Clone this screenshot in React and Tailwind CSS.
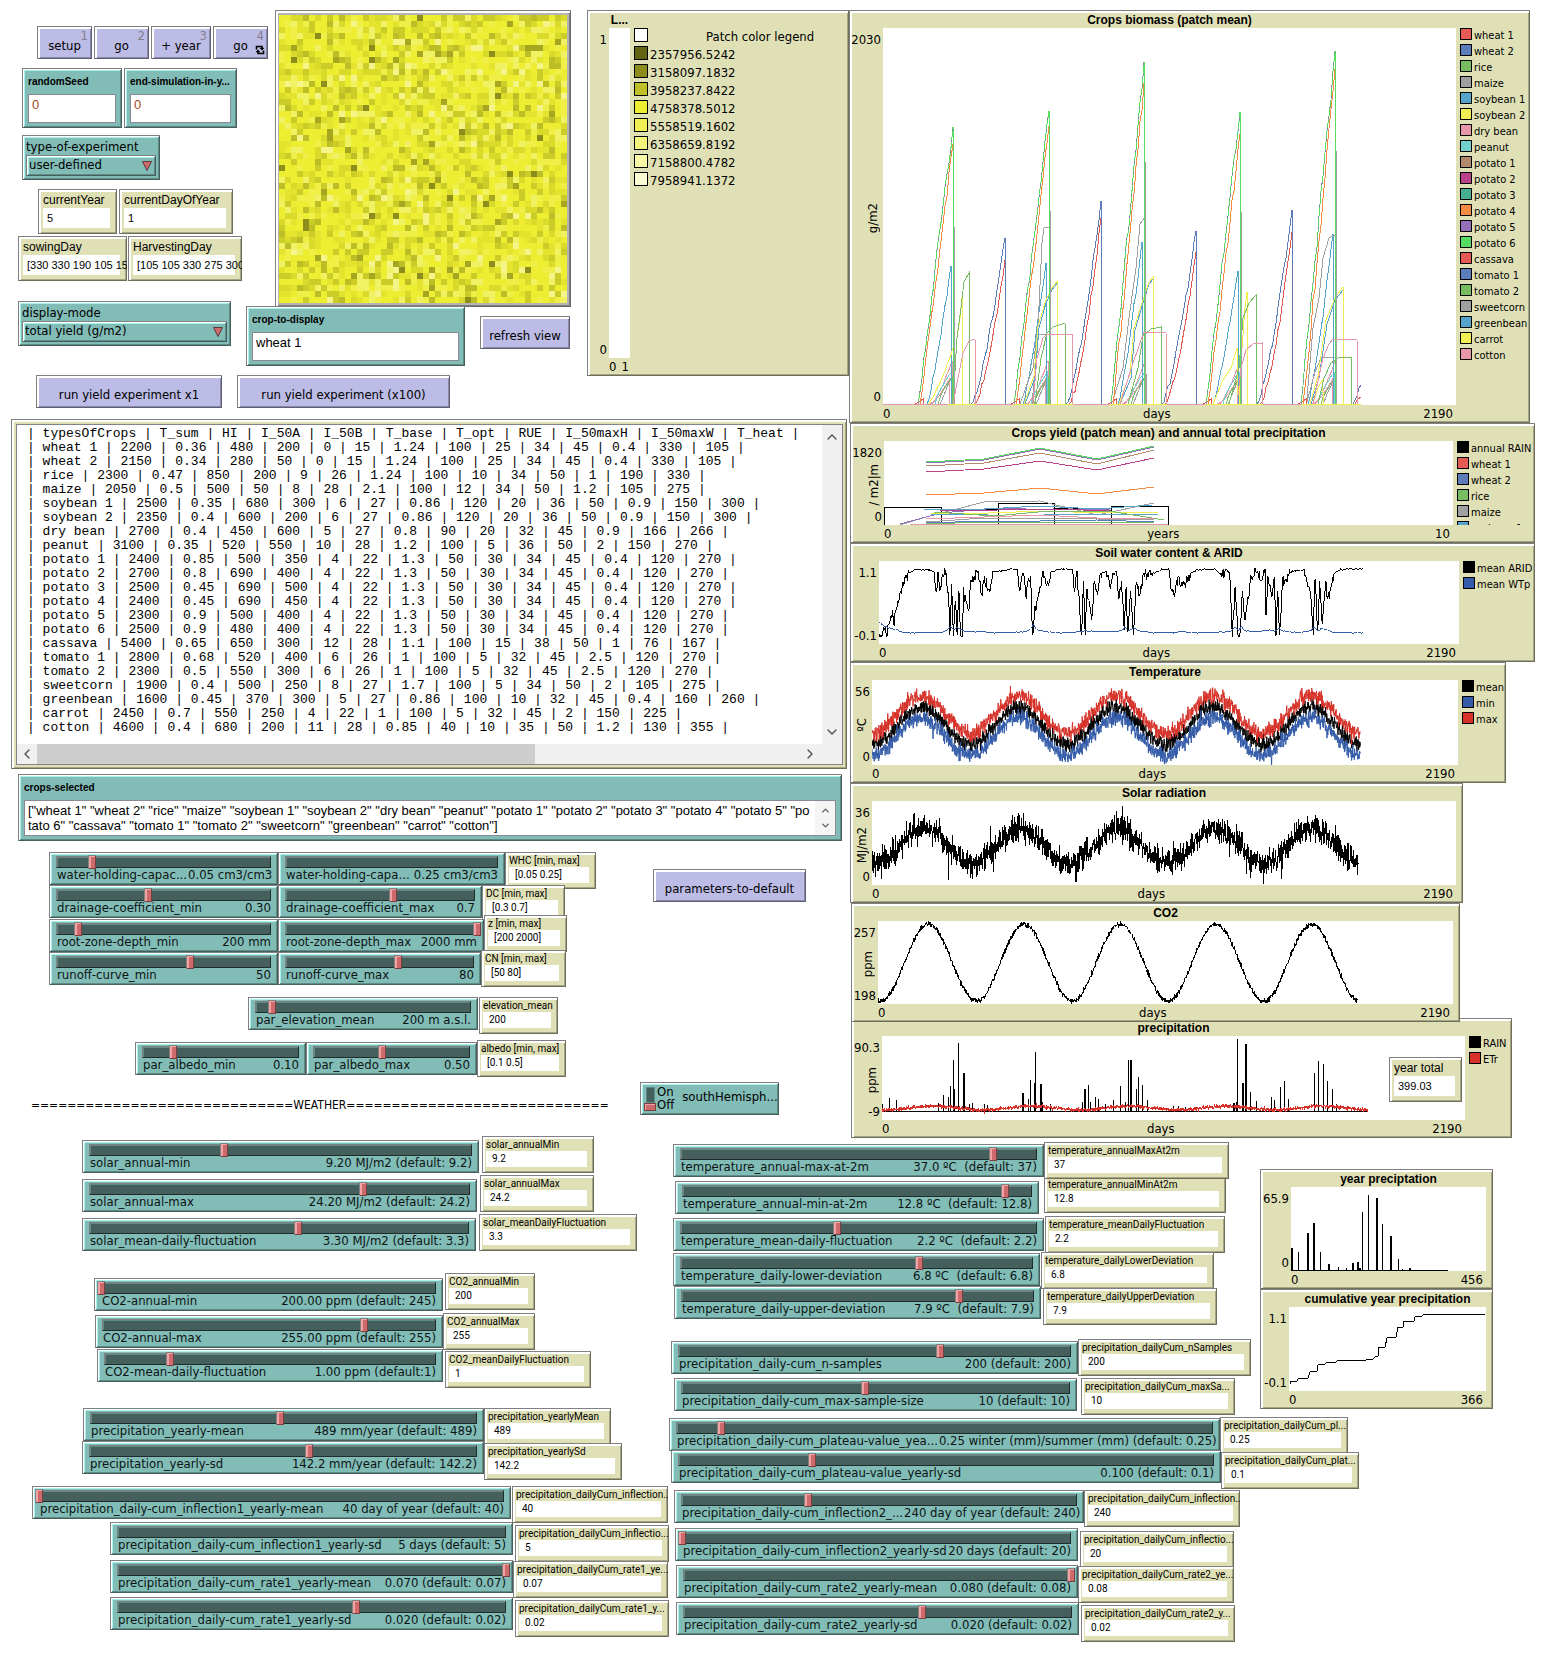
import React, { useId } from "react";
import { ChevronUp, ChevronDown, ChevronLeft, ChevronRight } from "lucide-react";

/* ---------- shared looks ---------- */

const TEAL =
  "bg-[#82bcb7] shadow-[inset_1px_1px_0_#808080,inset_-1px_-1px_0_#445f5c,inset_2px_2px_0_#ffffff,inset_-2px_-2px_0_#5f8b87,inset_3px_3px_0_#a6f3ee]";
const SAND =
  "bg-[#e0e0b6] shadow-[inset_1px_1px_0_#808080,inset_-1px_-1px_0_#6e6e59,inset_3px_3px_0_#ffffff,inset_-2px_-2px_0_#a5a585]";
const LILAC =
  "bg-[#bcbce6] shadow-[inset_1px_1px_0_#808080,inset_-1px_-1px_0_#5d5d75,inset_3px_3px_0_#ffffff,inset_-2px_-2px_0_#8989a9]";
const NARROW = "font-['Liberation_Sans',Arial,sans-serif]";

function Row({ className = "", children }) {
  return <div className={"flex items-start " + className}>{children}</div>;
}

/* ---------- widgets ---------- */

function Button({ className = "", hotkey, loop, children }) {
  return (
    <button type="button" className={"relative h-[33px] shrink-0 pt-[6px] text-[13px] leading-4 " + LILAC + " " + className}>
      {children}
      {hotkey && <span className="absolute right-1 top-0.5 text-[13px] text-[#80808f]">{hotkey}</span>}
      {loop && (
        <svg viewBox="0 0 10 10" className="absolute bottom-1 right-[3px] h-[10px] w-[10px]" aria-hidden="true">
          <path d="M1.5 4.5V1.5H7V3.5M8.5 5.5V8.5H3V6.5" fill="none" stroke="#000" strokeWidth="1.6" />
          <path d="M4.5 2.8H9.5L7 5.6ZM0.5 7.2H5.5L3 4.4Z" fill="#000" />
        </svg>
      )}
    </button>
  );
}

function Slider({ className = "", name, value, at }) {
  const id = useId();
  return (
    <div className={"h-[33px] shrink-0 px-[7px] pt-1 " + TEAL + " " + className}>
      <div className="relative h-3 border border-l-[#808080] border-t-[#808080] border-b-[#1f2c2b] border-r-[#1f2c2b] bg-[#455f5c] shadow-[inset_1px_1px_0_#5f8b87]">
        <input
          id={id}
          type="range"
          min="0"
          max="100"
          step="0.1"
          defaultValue={at ?? 50}
          aria-valuetext={value}
          className={
            "absolute -left-[5px] -top-[2px] h-[14px] w-[calc(100%+10px)] appearance-none bg-transparent [&::-webkit-slider-thumb]:h-[14px] [&::-webkit-slider-thumb]:w-2 [&::-webkit-slider-thumb]:appearance-none [&::-webkit-slider-thumb]:bg-[#cd6a6b] [&::-webkit-slider-thumb]:shadow-[inset_1px_1px_0_#808080,inset_-1px_-1px_0_#7a3f40,inset_3px_2px_0_#f3a3a4] " +
            (at === undefined ? "opacity-0" : "")
          }
        />
      </div>
      <div className="-mt-px flex justify-between gap-px whitespace-pre pl-px text-[13px] leading-4 text-[#0c1413]">
        <label htmlFor={id}>{name}</label>
        <span>{value}</span>
      </div>
    </div>
  );
}

function SmallMonitor({ className = "", name, value }) {
  return (
    <div className={"h-[37px] shrink-0 overflow-hidden pl-1 pr-[7px] pt-[3px] font-[Roboto,sans-serif] text-[10px] leading-3 " + SAND + " " + className}>
      <div className="whitespace-nowrap">{name}</div>
      <output aria-label={name} className="block h-4 whitespace-nowrap bg-white pl-[6px] pt-0.5">{value}</output>
    </div>
  );
}

function Monitor({ className = "", name, value }) {
  return (
    <div className={"h-[45px] shrink-0 overflow-hidden pl-[5px] pr-[7px] pt-1 text-xs leading-[15px] " + NARROW + " " + SAND + " " + className}>
      <div className="whitespace-nowrap">{name}</div>
      <output aria-label={name} className="block h-5 whitespace-nowrap bg-white pl-1 pt-[3px] text-[11px]">{value}</output>
    </div>
  );
}

function InputBox({ className = "", name, value, number }) {
  const id = useId();
  return (
    <div className={"flex h-[60px] shrink-0 flex-col px-[6px] pb-[5px] pt-[7px] " + NARROW + " " + TEAL + " " + className}>
      <label htmlFor={id} className="h-[19px] whitespace-nowrap text-[10px] font-bold leading-[14px]">{name}</label>
      <input
        id={id}
        defaultValue={value}
        className={
          "h-[29px] w-full min-w-0 border border-[#8a8a96] bg-white pb-2 pl-[3px] text-[13px] outline-none " +
          (number ? "text-[#a04a20]" : "text-black")
        }
      />
    </div>
  );
}

function Chooser({ className = "", name, value }) {
  const id = useId();
  return (
    <div className={"h-[45px] shrink-0 px-1 pt-1 " + TEAL + " " + className}>
      <label htmlFor={id} className="block text-[13px] leading-4">{name}</label>
      <div className={"relative h-[21px] " + TEAL}>
        <select id={id} defaultValue={value} className="block h-[21px] w-full appearance-none bg-transparent pb-0.5 pl-[3px] text-[13px] leading-4 outline-none">
          <option>{value}</option>
        </select>
        <svg viewBox="0 0 10 10" className="pointer-events-none absolute right-1 top-1.5 h-[10px] w-[10px]" aria-hidden="true">
          <path d="M0.5 0.5H9.5L5 9.5Z" fill="#cd6a6b" stroke="#5a3a3a" />
        </svg>
      </div>
    </div>
  );
}

/* ---------- plots ---------- */

function Plot({ className = "", cols, title, yMax, yMin, yName, xName, xMin = "0", xMax, viewBox, legend, gap = "pl-1", children }) {
  return (
    <section className={"grid w-full shrink-0 grid-rows-[18px_minmax(0,1fr)_18px] text-[13px] leading-4 " + SAND + " " + cols + " " + className}>
      <h2 className={"col-start-2 row-start-1 overflow-visible whitespace-nowrap pt-[3px] text-center text-xs leading-[15px] font-bold " + NARROW}>{title}</h2>
      <div className="col-start-1 row-start-2 flex min-h-0 flex-col items-end justify-between pr-0.5 pt-1">
        <span className="z-10 whitespace-nowrap">{yMax}</span>
        {yName && <span className="flex min-h-0 rotate-180 items-center overflow-hidden whitespace-nowrap [writing-mode:vertical-rl]">{yName}</span>}
        <span className="whitespace-nowrap">{yMin}</span>
      </div>
      <svg viewBox={viewBox} preserveAspectRatio="none" className="col-start-2 row-start-2 h-full w-full bg-white" aria-label={title} role="img">
        {children}
      </svg>
      {legend && (
        <ul className={"col-start-3 row-start-2 min-h-0 overflow-hidden text-[11px] leading-[15px] " + gap}>
          {legend.map(([label, colour]) => (
            <li key={label} className="flex h-4 items-start gap-0.5 whitespace-nowrap">
              <svg viewBox="0 0 12 12" className="h-3 w-3 shrink-0" aria-hidden="true">
                <rect x="0.5" y="0.5" width="11" height="11" fill={colour} stroke="#000" />
              </svg>
              <span>{label}</span>
            </li>
          ))}
        </ul>
      )}
      <div className="col-start-2 row-start-3 flex justify-between pr-[3px] pt-px">
        <span>{xMin}</span>
        <span>{xName}</span>
        <span>{xMax}</span>
      </div>
    </section>
  );
}

function Line({ points, colour = "#000", width = 1, dash }) {
  return (
    <polyline
      points={points}
      fill="none"
      stroke={colour}
      strokeWidth={width}
      strokeDasharray={dash}
      vectorEffect="non-scaling-stroke"
      shapeRendering="crispEdges"
    />
  );
}

function makeRandom(seed) {
  let s = seed;
  return () => {
    s = (s * 1664525 + 1013904223) % 4294967296;
    return s / 4294967296;
  };
}

function wave({ seed, end, peakX, period, top, bottom, noise, step = 0.59, spikes = 0 }) {
  const rnd = makeRandom(seed);
  const mid = (top + bottom) / 2;
  const amp = (bottom - top) / 2;
  const pts = [];
  for (let x = 0; x <= end; x += step) {
    const base = mid - amp * Math.cos(((x - peakX) / period) * Math.PI * 2);
    let n = (rnd() + rnd() + rnd() - 1.5) * noise;
    if (spikes && rnd() < 0.06) n *= spikes;
    pts.push(x.toFixed(1) + "," + (base + n).toFixed(1));
  }
  return pts.join(" ");
}

const C = {
  red: "#e35b52", blue: "#5d7dba", green: "#79bd62", gray: "#a0a0a0", sky: "#54a4cb", yellow: "#f0ee52",
  pink: "#e697a9", cyan: "#73d0cf", brown: "#b08a6b", magenta: "#b9428a", jade: "#47ae91", orange: "#f68b44",
  purple: "#9470b8", lime: "#57db60",
};

const CROPS = [
  ["wheat 1", C.red], ["wheat 2", C.blue], ["rice", C.green], ["maize", C.gray], ["soybean 1", C.sky],
  ["soybean 2", C.yellow], ["dry bean", C.pink], ["peanut", C.cyan], ["potato 1", C.brown], ["potato 2", C.magenta],
  ["potato 3", C.jade], ["potato 4", C.orange], ["potato 5", C.purple], ["potato 6", C.lime], ["cassava", C.red],
  ["tomato 1", C.blue], ["tomato 2", C.green], ["sweetcorn", C.gray], ["greenbean", C.sky], ["carrot", C.yellow],
  ["cotton", C.pink],
];

/* one season of growth, from the ground up to the harvest and straight down again */
function season(x0, x1, top, curve, seed, drop = true) {
  const rnd = makeRandom(seed);
  const pts = [x0 + ",376"];
  const n = Math.max(4, Math.round((x1 - x0) / 2));
  for (let i = 1; i <= n; i++) {
    const t = i / n;
    const wob = i === n ? 0 : (rnd() - 0.5) * 0.04;
    pts.push((x0 + (x1 - x0) * t).toFixed(1) + "," + (376 - (376 - top) * Math.max(0, Math.pow(t, curve) + wob)).toFixed(1));
  }
  if (drop) pts.push(x1 + ",376");
  return pts.join(" ");
}

const POTATO = [[35, 70, 99, 116], [131, 166, 83, 98], [228, 261, 34, 55], [323, 357, 84, 106], [418, 452, 23, 41]];
const WHEAT = [[88, 122, 210, 232], [183, 218, 173, 190], [279, 313, 203, 224], [374, 409, 182, 204]];
const BEAN = [[44, 68, 238], [140, 163, 235], [235, 259, 214], [330, 355, 243], [425, 450, 206]];

function BiomassPlot() {
  return (
    <Plot
      className="relative z-10 h-[413px] max-w-[681px]"
      cols="grid-cols-[34px_minmax(0,1fr)_74px]"
      title="Crops biomass (patch mean)" yMax="2030" yMin="0" yName="g/m2" xName="days" xMax="2190"
      viewBox="0 0 573 377" legend={CROPS}
    >
      {[32, 128, 225, 320, 415].map((x) => (
        <g key={x}>
          <Line points={season(x + 25, x + 38, 346, 1, x)} colour={C.gray} />
          <Line points={season(x + 16, x + 37, 333, 1.4, x + 1)} colour={C.pink} />
          <Line points={season(x + 14, x + 34, 352, 1.5, x + 2)} colour={C.pink} />
          <Line points={season(x + 23, x + 37, 350, 0.7, x + 3)} colour={C.green} />
          <Line points={season(x + 20, x + 36, 345, 0.7, x + 4)} colour={C.cyan} />
          <Line points={season(x, x + 8, 371, 1, x + 5)} colour={C.red} />
        </g>
      ))}
      {BEAN.map(([a, b, t]) => (
        <Line key={a} points={season(a, b, t, 1.25, a)} colour={C.sky} />
      ))}
      <Line points="149,376 154,320 159,215 161,200 167,199 168,376" colour={C.gray} />
      <Line points="230,372 240,340 246,290 253,240 257,196 262,189 262,376" colour={C.gray} />
      <Line points="424,370 430,300 436,270 440,230 446,210 453,207 453,376" colour={C.gray} />
      <Line points="424,374 432,344 438,330 453,329 453,376" colour={C.gray} />
      <Line points="137,376 150,340 154,306 167,306 167,376" colour={C.gray} />
      <Line points={season(45, 70, 320, 1.3, 5)} colour={C.yellow} />
      <Line points="70,376 74,310 77,290 79,269 79,376" colour={C.yellow} />
      <Line points="142,376 152,350 156,300 163,275 169,262 174,255 175,376" colour={C.sky} />
      <Line points="141,376 151,348 155,298 163,272 169,260 174,253 175,376" colour={C.yellow} />
      <Line points="237,376 248,350 252,302 260,275 266,256 270,251 270,376" colour={C.sky} />
      <Line points="236,376 247,346 251,300 260,272 266,254 270,249 270,376" colour={C.yellow} />
      <Line points="330,376 340,352 348,340 354,320 354,376" colour={C.yellow} />
      <Line points="356,376 359,320 362,280 364,264 364,376" colour={C.yellow} />
      <Line points="428,376 436,350 444,296 452,272 460,262 460,376" colour={C.sky} />
      <Line points="427,376 435,348 443,292 452,270 460,259 461,376" colour={C.yellow} />
      <Line points="430,376 435,360 439,352 441,376" colour={C.yellow} />
      <Line points="70,376 74,310 78,280 81,254 86,245 86,376" colour={C.green} />
      <Line points="152,376 158,330 164,305 170,299 182,295 183,376" colour={C.green} />
      <Line points="245,376 255,340 260,308 268,301 278,299 278,376" colour={C.green} />
      <Line points="346,376 356,340 360,290 366,275 373,267 373,376" colour={C.green} />
      <Line points="435,376 441,350 448,335 455,330 468,329 469,376" colour={C.green} />
      {POTATO.map(([a, b, top, low]) => (
        <g key={a}>
          <Line points={season(a + 2, b, low, 1.05, a)} colour={C.orange} />
          <Line points={season(a, b, top, 1.02, a + 7)} colour={C.lime} />
          <Line points={season(a, b, top, 1.02, a + 7, false)} colour={C.purple} dash="2 9" />
          <Line points={b + "," + (top + 40) + " " + b + ",376"} colour={C.lime} />
          <Line points={b + 1 + "," + (top + 100) + " " + (b + 1) + ",376"} colour={C.gray} />
        </g>
      ))}
      {WHEAT.map(([a, b, top, low]) => (
        <g key={a}>
          <Line points={season(a + 3, b, low, 1.5, a)} colour={C.red} />
          <Line points={season(a, b, top, 1.4, a + 3)} colour={C.blue} />
        </g>
      ))}
      <Line points="472,376 475,371 478,369" colour={C.red} />
      <Line points="470,376 474,368 476,360 478,357" colour={C.blue} />
      <Line points="0,376 70,376 75,350 80,325 86,313 92,311 93,376" colour={C.pink} />
      <Line points="150,376 154,330 160,310 164,306 189,306 189,376" colour={C.pink} />
      <Line points="237,376 250,335 256,318 261,304 283,304 284,376" colour={C.pink} />
      <Line points="354,376 358,340 363,322 370,316 379,315 379,376" colour={C.pink} />
      <Line points="430,376 440,330 446,316 450,311 474,311 475,376 478,376" colour={C.pink} />
      <Line points="0,376 478,376" colour={C.yellow} />
      <Line points="0,376 65,376" colour={C.pink} />
      <Line points="93,376 130,376" colour={C.pink} />
      <Line points="190,376 226,376" colour={C.pink} />
      <Line points="284,376 322,376" colour={C.pink} />
      <Line points="380,376 418,376" colour={C.pink} />
    </Plot>
  );
}

function YieldPlot() {
  return (
    <Plot
      className="ml-px h-[120px] max-w-[685px]"
      cols="grid-cols-[34px_minmax(0,1fr)_82px]"
      title="Crops yield (patch mean) and annual total precipitation" yMax="1820" yMin="0" yName="/ m2|m" xName="years" xMax="10"
      viewBox="0 0 569 84" legend={[["annual RAIN", "#000"], ...CROPS.slice(0, 5)]}
    >
      <Line points="0,84 0,66 57,66 57,84" />
      <Line points="57,84 57,68 114,68 114,84" />
      <Line points="114,84 114,62 170,62 170,84" />
      <Line points="170,84 170,67 227,67 227,84" />
      <Line points="227,84 227,65 284,65 284,84" />
      <Line points="42,22 100,19 156,8 213,19 270,6" colour={C.purple} />
      <Line points="42,21 100,18 156,7 213,18 270,5" colour={C.lime} />
      <Line points="42,25 100,22 156,12 213,23 270,9" colour={C.brown} />
      <Line points="42,31 100,28 156,20 213,29 270,17" colour={C.magenta} />
      <Line points="42,54 100,52 156,47 213,53 270,46" colour={C.orange} />
      <Line points="16,84 42,76 100,61 156,60 213,74 270,62" colour={C.gray} />
      <Line points="16,83 57,72 114,67 170,69 227,68 250,68" colour={C.purple} />
      <Line points="40,68 100,68 156,65 213,68 268,64" colour={C.sky} />
      <Line points="56,70 114,69 170,68 227,70" colour={C.magenta} />
      <Line points="47,72 105,72 160,70 218,72 275,71" colour={C.yellow} />
      <Line points="47,74 105,73 160,73 218,74 275,73" colour={C.sky} />
      <Line points="50,71 110,75 165,70 225,70 280,79" colour={C.green} />
      <Line points="42,78 100,76 156,74 213,77 270,77" colour={C.pink} />
      <Line points="42,81 100,77 156,77 213,78 270,79" colour={C.gray} />
      <Line points="42,82 100,80 156,80 213,79 270,81" colour={C.blue} />
      <Line points="42,83 100,81 156,81 213,81 270,82" colour={C.green} />
      <Line points="26,84 34,84 284,84" colour={C.pink} width={2} />
    </Plot>
  );
}

const ARID =
  "0,230 8,222 14,200 16,228 22,190 30,150 32,190 40,140 48,90 56,60 66,35 78,25 90,23 110,25 122,32 126,95 130,32 134,90 140,40 148,35 154,135 156,225 160,70 164,228 168,120 172,225 176,90 180,225 184,230 186,80 192,130 198,150 202,60 210,45 218,30 226,100 232,45 244,95 250,30 270,28 290,22 305,24 310,90 318,35 324,115 328,60 334,45 338,225 342,160 348,120 354,80 360,35 370,70 380,32 394,23 426,23 430,95 436,30 442,150 446,225 450,60 454,225 458,85 468,180 474,60 480,95 488,35 500,30 508,75 514,40 522,30 528,115 534,60 540,210 544,80 548,215 554,90 560,225 566,70 574,100 582,40 600,35 612,30 622,24 638,23 642,75 650,110 658,50 668,75 676,65 686,35 700,24 740,23 750,35 756,45 764,25 772,35 778,230 784,80 790,225 796,210 800,90 806,180 812,110 820,45 834,30 842,60 850,25 852,165 856,45 864,110 870,50 874,228 878,90 882,225 888,60 896,55 910,28 936,25 944,80 950,90 956,225 960,55 966,210 970,60 976,190 984,60 988,115 996,70 1002,35 1016,24 1030,22 1064,22";

const WTP =
  "0,184 10,195 24,203 38,205 50,214 66,217 140,215 152,205 158,198 166,208 172,200 184,210 210,214 230,212 250,217 320,214 334,205 340,192 346,205 360,211 390,217 440,214 452,210 480,213 530,212 542,200 550,212 560,202 572,210 600,216 650,216 665,213 690,217 750,215 776,212 784,200 792,210 798,198 804,210 830,214 860,208 872,212 880,204 892,212 920,216 948,212 958,200 966,212 974,202 986,208 1000,215 1030,217 1064,217";

function jagged(points, seed, size, swing = 0) {
  const rnd = makeRandom(seed);
  const src = points.split(" ").map((p) => p.split(",").map(Number));
  const out = [];
  src.forEach(([x, y], i) => {
    out.push(x + "," + y);
    const next = src[i + 1];
    if (!next) return;
    const steps = Math.floor((next[0] - x) / 1.5);
    for (let k = 1; k < steps; k++) {
      const t = k / steps;
      const base = y + (next[1] - y) * t;
      const extra = base > 34 ? (rnd() - 0.5) * swing : 0;
      out.push((x + (next[0] - x) * t).toFixed(1) + "," + Math.min(230, base + rnd() * size + extra).toFixed(1));
    }
  });
  return out.join(" ");
}

function SoilPlot() {
  return (
    <Plot
      className="ml-px h-[119px] max-w-[685px]"
      cols="grid-cols-[29px_minmax(0,1fr)_76px]"
      title="Soil water content &amp; ARID" yMax="1.1" yMin="-0.1" xName="days" xMax="2190"
      viewBox="0 0 1277 252" legend={[["mean ARID", "#000"], ["mean WTp", "#345ca9"]]}
    >
      <Line points={jagged(ARID, 3, 5, 36)} />
      <Line points={jagged(WTP, 9, 3)} colour="#345ca9" />
    </Plot>
  );
}

function TemperaturePlot() {
  const base = { end: 1076, peakX: 108, period: 215, noise: 22, spikes: 1.5 };
  return (
    <Plot
      className="ml-px h-[121px] max-w-[656px]"
      cols="grid-cols-[22px_minmax(0,1fr)_48px]"
      title="Temperature" yMax="56" yMin="0" yName="ºC" xName="days" xMax="2190"
      viewBox="0 0 1291 251" legend={[["mean", "#000"], ["min", "#345ca9"], ["max", "#d73229"]]}
    >
      <Line points={wave({ ...base, seed: 11, top: 80, bottom: 190 })} />
      <Line points={wave({ ...base, seed: 12, top: 112, bottom: 222 })} colour="#345ca9" />
      <Line points={wave({ ...base, seed: 13, top: 47, bottom: 156 })} colour="#d73229" />
    </Plot>
  );
}

function SolarPlot() {
  return (
    <Plot
      className="ml-px h-[120px] max-w-[613px]"
      cols="grid-cols-[22px_minmax(0,1fr)_7px]"
      title="Solar radiation" yMax="36" yMin="0" yName="MJ/m2" xName="days" xMax="2190"
      viewBox="0 0 1287 251"
    >
      <Line points={wave({ seed: 21, end: 1072, peakX: 115, period: 214, top: 82, bottom: 186, noise: 40, spikes: 1.8 })} />
    </Plot>
  );
}

function Co2Plot() {
  return (
    <Plot
      className="relative z-10 ml-0.5 h-[119px] max-w-[609px]"
      cols="grid-cols-[27px_minmax(0,1fr)_7px]"
      title="CO2" yMax="257" yMin="198" yName="ppm" xName="days" xMax="2190"
      viewBox="0 0 1266 252"
    >
      <Line points={wave({ seed: 31, end: 1055, peakX: 111, period: 211, top: 10, bottom: 243, noise: 8 })} />
    </Plot>
  );
}

const RAIN = [
  [2, 204], [17, 187], [32, 192], [125, 202], [136, 177], [147, 182], [151, 150], [158, 72], [160, 159], [169, 22], [181, 111, 1],
  [193, 204], [200, 202], [226, 205], [233, 208], [311, 171, 1], [323, 189], [327, 132], [336, 140], [338, 48], [350, 144, 1],
  [354, 197], [371, 205], [442, 197], [448, 159, 1], [455, 147], [460, 197], [470, 182], [477, 189], [493, 205], [510, 192],
  [526, 150], [537, 198], [543, 72], [549, 72, 1], [561, 159], [564, 123], [574, 147], [585, 192], [643, 210], [653, 210],
  [668, 212], [775, 202, 1], [780, 197], [783, 10], [795, 142, 1], [801, 25, 1], [812, 168], [824, 195], [857, 183], [865, 192],
  [878, 153], [887, 135], [896, 189], [953, 111], [962, 75], [973, 84], [981, 135], [993, 159], [1001, 205],
];

function RainPlot() {
  return (
    <div className="relative -mt-1 ml-0.5 max-w-[661px]">
      <Plot
        className="h-[120px]"
        cols="grid-cols-[31px_minmax(0,1fr)_47px]"
        title="precipitation" yMax="90.3" yMin="-9" yName="ppm" xName="days" xMax="2190"
        viewBox="0 0 1284 252" legend={[["RAIN", "#000"], ["ETr", "#d73229"]]}
      >
        {RAIN.map(([x, y, wide]) => (
          <Line key={x} points={x + "," + y + " " + x + ",226"} width={wide ? 2 : 1} />
        ))}
        <Line points="0,226 1070,226" />
        <Line points={wave({ seed: 41, end: 1070, peakX: 115, period: 214, top: 210, bottom: 222, noise: 5 })} colour="#d73229" />
      </Plot>
      <Monitor className="absolute right-[50px] top-[39px] w-[73px]" name="year total" value="399.03" />
    </div>
  );
}

const YEAR_RAIN = [
  [1, 61, 2], [7, 65], [16, 73], [17, 46, 2], [23, 36, 2], [29, 65], [38, 77, 2], [47, 80], [55, 81], [62, 76, 2], [67, 75, 2],
  [69, 81, 2], [71, 25], [77, 8], [86, 11, 2], [91, 37], [100, 49, 2], [107, 72], [111, 82], [119, 81, 2],
];

function YearPlots() {
  return (
    <div className="mt-[35px] w-full max-w-[233px]">
      <Plot
        className="h-[120px]" cols="grid-cols-[31px_minmax(0,1fr)_7px]"
        title="year preciptation" yMax="65.9" yMin="0" xMax="456" viewBox="0 0 195 84"
      >
        {YEAR_RAIN.map(([x, y, wide]) => (
          <Line key={x} points={x + "," + y + " " + x + ",84"} width={wide ? 2 : 1} />
        ))}
        <Line points="0,83 157,83" />
      </Plot>
      <Plot
        className="h-[120px]" cols="grid-cols-[29px_minmax(0,1fr)_7px]"
        title="cumulative year precipitation" yMax="1.1" yMin="-0.1" xMax="366" viewBox="0 0 197 84"
      >
        <Line points="1,77 1,74 8,74 9,72 19,71 21,65 28,64 29,58 36,57 38,55 47,55 49,53 77,53 79,52 84,52 86,50 89,49 89,41 96,40 98,31 107,30 109,20 114,20 115,14 125,14 126,10 133,9 135,7 196,7" />
      </Plot>
    </div>
  );
}

const SHADES = [
  ["#ffffff", "Patch color legend"], ["#636314", "2357956.5242"], ["#8d8d1c", "3158097.1832"], ["#bfbf26", "3958237.8422"],
  ["#eded31", "4758378.5012"], ["#f0f055", "5558519.1602"], ["#f3f37c", "6358659.8192"], ["#f7f7a6", "7158800.4782"],
  ["#fbfbd3", "7958941.1372"],
];

function LegendPlot() {
  return (
    <section className={"grid h-[366px] min-w-0 flex-1 grid-cols-[22px_21px_minmax(0,1fr)] grid-rows-[18px_minmax(0,1fr)_18px] text-[13px] leading-4 " + SAND}>
      <h2 className={"col-start-2 row-start-1 pt-[3px] text-center text-xs font-bold leading-[15px] " + NARROW}>L...</h2>
      <div className="row-start-2 flex flex-col items-end justify-between pr-0.5 pt-1">
        <span>1</span>
        <span>0</span>
      </div>
      <div className="row-start-2 bg-white" />
      <ul className="row-start-2 pl-1 leading-[18px]">
        {SHADES.map(([colour, label], i) => (
          <li key={label} className="flex h-[18px] items-start gap-0.5 whitespace-nowrap">
            <svg viewBox="0 0 14 14" className="h-[14px] w-[14px] shrink-0" aria-hidden="true">
              <rect x="0.5" y="0.5" width="13" height="13" fill={colour} stroke="#000" />
            </svg>
            <span className={i === 0 ? "pl-14" : ""}>{label}</span>
          </li>
        ))}
      </ul>
      <div className="col-start-2 row-start-3 flex justify-between pr-px pt-px">
        <span>0</span>
        <span>1</span>
      </div>
    </section>
  );
}

/* ---------- world view ---------- */

const PATCH_COLOURS = [
  ["#eded31", 34], ["#e4e42e", 13], ["#dada2b", 11], ["#cccc29", 10], ["#bdbd26", 6], ["#a6a621", 2], ["#8d8d1c", 1],
  ["#efef48", 11], ["#f1f164", 9], ["#f4f488", 3],
];

function worldPaths() {
  const rnd = makeRandom(77);
  const paths = PATCH_COLOURS.map(() => "");
  for (let y = 0; y < 48; y++) {
    for (let x = 0; x < 48; x++) {
      let r = rnd() * 100;
      let i = 0;
      while (i < PATCH_COLOURS.length - 1 && r > PATCH_COLOURS[i][1]) {
        r -= PATCH_COLOURS[i][1];
        i += 1;
      }
      paths[i] += "M" + x + " " + y + "h1v1h-1z";
    }
  }
  paths[6] += "M36 13h1v1h-1zM35 1h1v1h-1zM9 2h1v1h-1z";
  return paths;
}

function World() {
  return (
    <div className="h-[297px] w-[296px] shrink-0 bg-[#b4b4b4] pl-1 pt-[5px] shadow-[inset_1px_1px_0_#808080,inset_-1px_-1px_0_#6a6a6a,inset_3px_3px_0_#ffffff,inset_-2px_-2px_0_#7d7d7d]">
      <svg viewBox="0 0 48 48" className="h-72 w-72" shapeRendering="crispEdges" role="img" aria-label="World view">
        {worldPaths().map((d, i) => (
          <path key={i} d={d} fill={PATCH_COLOURS[i][0]} />
        ))}
      </svg>
    </div>
  );
}

/* ---------- output and text ---------- */

const OUTPUT = `| typesOfCrops | T_sum | HI | I_50A | I_50B | T_base | T_opt | RUE | I_50maxH | I_50maxW | T_heat |
| wheat 1 | 2200 | 0.36 | 480 | 200 | 0 | 15 | 1.24 | 100 | 25 | 34 | 45 | 0.4 | 330 | 105 |
| wheat 2 | 2150 | 0.34 | 280 | 50 | 0 | 15 | 1.24 | 100 | 25 | 34 | 45 | 0.4 | 330 | 105 |
| rice | 2300 | 0.47 | 850 | 200 | 9 | 26 | 1.24 | 100 | 10 | 34 | 50 | 1 | 190 | 330 |
| maize | 2050 | 0.5 | 500 | 50 | 8 | 28 | 2.1 | 100 | 12 | 34 | 50 | 1.2 | 105 | 275 |
| soybean 1 | 2500 | 0.35 | 680 | 300 | 6 | 27 | 0.86 | 120 | 20 | 36 | 50 | 0.9 | 150 | 300 |
| soybean 2 | 2350 | 0.4 | 600 | 200 | 6 | 27 | 0.86 | 120 | 20 | 36 | 50 | 0.9 | 150 | 300 |
| dry bean | 2700 | 0.4 | 450 | 600 | 5 | 27 | 0.8 | 90 | 20 | 32 | 45 | 0.9 | 166 | 266 |
| peanut | 3100 | 0.35 | 520 | 550 | 10 | 28 | 1.2 | 100 | 5 | 36 | 50 | 2 | 150 | 270 |
| potato 1 | 2400 | 0.85 | 500 | 350 | 4 | 22 | 1.3 | 50 | 30 | 34 | 45 | 0.4 | 120 | 270 |
| potato 2 | 2700 | 0.8 | 690 | 400 | 4 | 22 | 1.3 | 50 | 30 | 34 | 45 | 0.4 | 120 | 270 |
| potato 3 | 2500 | 0.45 | 690 | 500 | 4 | 22 | 1.3 | 50 | 30 | 34 | 45 | 0.4 | 120 | 270 |
| potato 4 | 2400 | 0.45 | 690 | 450 | 4 | 22 | 1.3 | 50 | 30 | 34 | 45 | 0.4 | 120 | 270 |
| potato 5 | 2300 | 0.9 | 500 | 400 | 4 | 22 | 1.3 | 50 | 30 | 34 | 45 | 0.4 | 120 | 270 |
| potato 6 | 2500 | 0.9 | 480 | 400 | 4 | 22 | 1.3 | 50 | 30 | 34 | 45 | 0.4 | 120 | 270 |
| cassava | 5400 | 0.65 | 650 | 300 | 12 | 28 | 1.1 | 100 | 15 | 38 | 50 | 1 | 76 | 167 |
| tomato 1 | 2800 | 0.68 | 520 | 400 | 6 | 26 | 1 | 100 | 5 | 32 | 45 | 2.5 | 120 | 270 |
| tomato 2 | 2300 | 0.5 | 550 | 300 | 6 | 26 | 1 | 100 | 5 | 32 | 45 | 2.5 | 120 | 270 |
| sweetcorn | 1900 | 0.4 | 500 | 250 | 8 | 27 | 1.7 | 100 | 5 | 34 | 50 | 2 | 105 | 275 |
| greenbean | 1600 | 0.45 | 370 | 300 | 5 | 27 | 0.86 | 100 | 10 | 32 | 45 | 0.4 | 160 | 260 |
| carrot | 2450 | 0.7 | 550 | 250 | 4 | 22 | 1 | 100 | 5 | 32 | 45 | 2 | 150 | 225 |
| cotton | 4600 | 0.4 | 680 | 200 | 11 | 28 | 0.85 | 40 | 10 | 35 | 50 | 1.2 | 130 | 355 |`;

function OutputArea() {
  return (
    <div className={"ml-[11px] mt-[11px] h-[350px] w-[836px] p-[5px] pb-1 pr-1 " + SAND}>
      <div className="flex h-full flex-col border border-[#82828c] bg-white">
        <div className="flex min-h-0 flex-1">
          <pre className="min-w-0 flex-1 overflow-hidden pl-[10px] pt-0.5 font-['Liberation_Mono',monospace] text-[13px] leading-[14px]">{OUTPUT}</pre>
          <div className="flex w-5 shrink-0 flex-col items-center justify-between bg-[#f0f0f0] py-1 text-[#505050]">
            <ChevronUp size={16} />
            <ChevronDown size={16} />
          </div>
        </div>
        <div className="flex h-5 shrink-0 items-center bg-[#f0f0f0] pr-6 text-[#505050]">
          <ChevronLeft size={16} className="mx-0.5 shrink-0" />
          <div className="h-full w-[498px] bg-[#cdcdcd]" />
          <ChevronRight size={16} className="ml-auto shrink-0" />
        </div>
      </div>
    </div>
  );
}

const SELECTED =
  '["wheat 1" "wheat 2" "rice" "maize" "soybean 1" "soybean 2" "dry bean" "peanut" "potato 1" "potato 2" "potato 3" "potato 4" "potato 5" "po\ntato 6" "cassava" "tomato 1" "tomato 2" "sweetcorn" "greenbean" "carrot" "cotton"]';

function CropsSelected() {
  return (
    <div className={"ml-[18px] mt-[5px] h-[67px] w-[824px] px-[6px] pt-[7px] " + NARROW + " " + TEAL}>
      <label htmlFor="crops-selected" className="block h-[19px] text-[10px] font-bold leading-[14px]">crops-selected</label>
      <div className="flex h-9 border border-[#8a8a96] bg-white">
        <textarea
          id="crops-selected"
          defaultValue={SELECTED}
          className="h-full min-w-0 flex-1 resize-none overflow-hidden whitespace-pre pl-[3px] pt-0.5 text-[13px] leading-[15px] outline-none"
        />
        <div className="flex w-5 shrink-0 flex-col items-center justify-between bg-[#f5f5f5] py-1 text-[#606060]">
          <ChevronUp size={11} strokeWidth={3} />
          <ChevronDown size={11} strokeWidth={3} />
        </div>
      </div>
    </div>
  );
}

function Switch() {
  return (
    <label className={"mt-[180px] flex h-[33px] w-[139px] items-center text-[13px] " + TEAL}>
      <input type="checkbox" className="peer sr-only" />
      <span className="ml-1 flex h-6 w-3 flex-col items-center justify-end" aria-hidden="true">
        <span className="h-4 w-[9px] border border-[#5f8b87] bg-[#455f5c]" />
        <span className="h-2 w-3 border border-[#7a3f40] bg-[#cd6a6b] shadow-[inset_1px_1px_0_#f3a3a4]" />
      </span>
      <span className="ml-px flex flex-col pb-0.5 leading-[13px]">
        <span>On</span>
        <span>Off</span>
      </span>
      <span className="-mt-1 ml-2">southHemisph...</span>
    </label>
  );
}

/* ---------- page areas ---------- */

function Controls() {
  return (
    <div className="w-[587px] shrink-0">
      <Row>
        <div className="w-[275px] shrink-0 pt-4">
          <Row className="gap-0.5 pl-[37px]">
            <Button className="w-[55px]" hotkey="1">setup</Button>
            <Button className="w-[55px]" hotkey="2">go</Button>
            <Button className="w-[60px]" hotkey="3">+ year</Button>
            <Button className="w-[55px]" hotkey="4" loop>go</Button>
          </Row>
          <Row className="mt-[9px] gap-0.5 pl-[22px]">
            <InputBox className="w-[100px]" name="randomSeed" value="0" number />
            <InputBox className="w-[113px]" name="end-simulation-in-y..." value="0" number />
          </Row>
          <Chooser className="ml-[22px] mt-[7px] w-[138px]" name="type-of-experiment" value="user-defined" />
          <Row className="mt-[9px] gap-0.5 pl-[38px]">
            <Monitor className="w-[79px]" name="currentYear" value="5" />
            <Monitor className="w-[114px]" name="currentDayOfYear" value="1" />
          </Row>
          <Row className="mt-0.5 gap-px pl-[18px]">
            <Monitor className="w-[109px]" name="sowingDay" value="[330 330 190 105 15" />
            <Monitor className="w-[114px]" name="HarvestingDay" value="[105 105 330 275 300" />
          </Row>
        </div>
        <World />
      </Row>
      <Row className="-mt-[6px] gap-[15px] pl-[18px]">
        <Chooser className="w-[213px]" name="display-mode" value="total yield (g/m2)" />
        <InputBox className="mt-[5px] w-[219px]" name="crop-to-display" value="wheat 1" />
        <Button className="mt-[15px] w-[90px]">refresh view</Button>
      </Row>
      <Row className="mt-[9px] gap-[15px] pl-9">
        <Button className="w-[186px]">run yield experiment x1</Button>
        <Button className="w-[213px]">run yield experiment (x100)</Button>
      </Row>
    </div>
  );
}

function SoilControls() {
  return (
    <Row className="mt-[11px]">
      <div className="w-[640px] shrink-0">
        <Row className="h-[33px] pl-[49px]">
          <Slider className="w-[229px]" name="water-holding-capac..." value="0.05 cm3/cm3" at={16.7} />
          <Slider className="w-[227px]" name="water-holding-capa..." value="0.25 cm3/cm3" />
          <SmallMonitor className="w-[91px]" name="WHC [min, max]" value="[0.05 0.25]" />
        </Row>
        <Row className="h-[33px] pl-[49px]">
          <Slider className="w-[229px]" name="drainage-coefficient_min" value="0.30" at={43} />
          <Slider className="w-[204px]" name="drainage-coefficient_max" value="0.7" at={56.6} />
          <SmallMonitor className="w-[83px]" name="DC [min, max]" value="[0.3 0.7]" />
        </Row>
        <Row className="mt-px h-[33px] pl-[49px]">
          <Slider className="w-[229px]" name="root-zone-depth_min" value="200 mm" at={10.3} />
          <Slider className="w-[206px]" name="root-zone-depth_max" value="2000 mm" at={100} />
          <SmallMonitor className="-mt-1 w-[83px]" name="z [min, max]" value="[200 2000]" />
        </Row>
        <Row className="h-[33px] pl-[49px]">
          <Slider className="w-[229px]" name="runoff-curve_min" value="50" at={62.3} />
          <Slider className="w-[203px]" name="runoff-curve_max" value="80" at={59.6} />
          <SmallMonitor className="-mt-0.5 w-[85px]" name="CN [min, max]" value="[50 80]" />
        </Row>
        <Row className="mt-3 h-[33px] gap-px pl-[248px]">
          <Slider className="w-[230px]" name="par_elevation_mean" value="200 m a.s.l." at={7.9} />
          <SmallMonitor className="w-[79px]" name="elevation_mean" value="200" />
        </Row>
        <Row className="mt-3 h-[33px] pl-[135px]">
          <Slider className="w-[171px]" name="par_albedo_min" value="0.10" at={19.7} />
          <Slider className="w-[171px]" name="par_albedo_max" value="0.50" at={44} />
          <SmallMonitor className="-mt-0.5 w-[89px]" name="albedo [min, max]" value="[0.1 0.5]" />
        </Row>
        <p className="mt-[22px] whitespace-nowrap pl-[31px] text-xs leading-4">
          =============================WEATHER=============================
        </p>
      </div>
      <div className="pt-[17px]">
        <Button className="ml-[13px] w-[153px]">parameters-to-default</Button>
        <Switch />
      </div>
    </Row>
  );
}

function WeatherLeft() {
  return (
    <div className="w-[669px] shrink-0 pt-0.5">
      <div className="flex flex-col gap-0.5 pl-[82px]">
        <Row className="gap-[3px]">
          <Slider className="mt-1 w-[397px]" name="solar_annual-min" value="9.20 MJ/m2 (default: 9.2)" at={35.3} />
          <SmallMonitor className="w-[112px]" name="solar_annualMin" value="9.2" />
        </Row>
        <Row className="gap-[3px]">
          <Slider className="mt-1 w-[395px]" name="solar_annual-max" value="24.20 MJ/m2 (default: 24.2)" at={71.9} />
          <SmallMonitor className="w-[114px]" name="solar_annualMax" value="24.2" />
        </Row>
        <Row className="gap-[3px]">
          <Slider className="mt-1 w-[394px]" name="solar_mean-daily-fluctuation" value="3.30 MJ/m2 (default: 3.3)" at={54.9} />
          <SmallMonitor className="w-[158px]" name="solar_meanDailyFluctuation" value="3.3" />
        </Row>
      </div>
      <Row className="mt-[22px] gap-0.5 pl-[94px]">
        <Slider className="mt-[5px] w-[349px]" name="CO2-annual-min" value="200.00 ppm (default: 245)" at={0} />
        <SmallMonitor className="w-[90px]" name="CO2_annualMin" value="200" />
      </Row>
      <Row className="mt-0.5 pl-[95px]">
        <Slider className="mt-0.5 w-[348px]" name="CO2-annual-max" value="255.00 ppm (default: 255)" at={78.4} />
        <SmallMonitor className="w-[92px]" name="CO2_annualMax" value="255" />
      </Row>
      <Row className="-mt-px gap-0.5 pl-[97px]">
        <Slider className="w-[346px]" name="CO2-mean-daily-fluctuation" value="1.00 ppm (default:1)" at={19.9} />
        <SmallMonitor className="mt-0.5 w-[146px]" name="CO2_meanDailyFluctuation" value="1" />
      </Row>
      <Row className="mt-5 pl-[83px]">
        <Slider className="w-[401px]" name="precipitation_yearly-mean" value="489 mm/year (default: 489)" at={49} />
        <SmallMonitor className="w-[127px]" name="precipitation_yearlyMean" value="489" />
      </Row>
      <Row className="-mt-1 pl-[82px]">
        <Slider className="w-[402px]" name="precipitation_yearly-sd" value="142.2 mm/year (default: 142.2)" at={56.8} />
        <SmallMonitor className="mt-0.5 w-[138px]" name="precipitation_yearlySd" value="142.2" />
      </Row>
      <Row className="mt-[6px] gap-px pl-8">
        <Slider className="w-[479px]" name="precipitation_daily-cum_inflection1_yearly-mean" value="40 day of year (default: 40)" at={0} />
        <SmallMonitor className="w-[156px]" name="precipitation_dailyCum_inflection..." value="40" />
      </Row>
      <Row className="-mt-px gap-0.5 pl-[110px]">
        <Slider className="w-[403px]" name="precipitation_daily-cum_inflection1_yearly-sd" value="5 days (default: 5)" />
        <SmallMonitor className="mt-[3px] w-[154px]" name="precipitation_dailyCum_inflectio..." value="5" />
      </Row>
      <Row className="-mt-0.5 pl-[110px]">
        <Slider className="w-[403px]" name="precipitation_daily-cum_rate1_yearly-mean" value="0.070 (default: 0.07)" at={100} />
        <SmallMonitor className="mt-px w-[155px]" name="precipitation_dailyCum_rate1_ye..." value="0.07" />
      </Row>
      <Row className="-mt-px gap-0.5 pl-[110px]">
        <Slider className="w-[403px]" name="precipitation_daily-cum_rate1_yearly-sd" value="0.020 (default: 0.02)" at={61.4} />
        <SmallMonitor className="mt-[3px] w-[154px]" name="precipitation_dailyCum_rate1_y..." value="0.02" />
      </Row>
    </div>
  );
}

function WeatherRight() {
  return (
    <div className="min-w-0 flex-1">
      <Row>
        <div className="w-[591px] shrink-0 pt-2">
          <Row className="relative z-10 pl-1">
            <Slider className="mt-0.5 w-[371px]" name="temperature_annual-max-at-2m" value="37.0 ºC  (default: 37)" at={87.7} />
            <SmallMonitor className="w-[185px]" name="temperature_annualMaxAt2m" value="37" />
          </Row>
          <Row className="-mt-[3px] gap-[5px] pl-[6px]">
            <Slider className="mt-[5px] w-[364px]" name="temperature_annual-min-at-2m" value="12.8 ºC  (default: 12.8)" at={92.3} />
            <SmallMonitor className="w-[182px]" name="temperature_annualMinAt2m" value="12.8" />
          </Row>
          <Row className="mt-0.5 gap-px pl-1">
            <Slider className="mt-0.5 w-[371px]" name="temperature_mean-daily-fluctuation" value="2.2 ºC  (default: 2.2)" at={44} />
            <SmallMonitor className="w-[180px]" name="temperature_meanDailyFluctuation" value="2.2" />
          </Row>
          <Row className="-mt-px gap-px pl-1">
            <Slider className="mt-px w-[367px]" name="temperature_daily-lower-deviation" value="6.8 ºC  (default: 6.8)" at={67.7} />
            <SmallMonitor className="w-[173px]" name="temperature_dailyLowerDeviation" value="6.8" />
          </Row>
          <Row className="-mt-[3px] gap-0.5 pl-[5px]">
            <Slider className="w-[367px]" name="temperature_daily-upper-deviation" value="7.9 ºC  (default: 7.9)" at={78.8} />
            <SmallMonitor className="mt-0.5 w-[174px]" name="temperature_dailyUpperDeviation" value="7.9" />
          </Row>
          <Row className="mt-[14px] pl-0.5">
            <Slider className="mt-0.5 w-[407px]" name="precipitation_daily-cum_n-samples" value="200 (default: 200)" at={66.7} />
            <SmallMonitor className="w-[173px]" name="precipitation_dailyCum_nSamples" value="200" />
          </Row>
          <Row className="mt-0.5 gap-1 pl-[5px]">
            <Slider className="w-[403px]" name="precipitation_daily-cum_max-sample-size" value="10 (default: 10)" at={47.3} />
            <SmallMonitor className="w-[154px]" name="precipitation_dailyCum_maxSa..." value="10" />
          </Row>
        </div>
        <YearPlots />
      </Row>
      <Row className="mt-0.5">
        <Slider className="mt-px w-[551px]" name="precipitation_daily-cum_plateau-value_yea..." value="0.25 winter (mm)/summer (mm) (default: 0.25)" at={8.4} />
        <SmallMonitor className="w-[128px]" name="precipitation_dailyCum_pl..." value="0.25" />
      </Row>
      <Row className="-mt-1 pl-0.5">
        <Slider className="w-[550px]" name="precipitation_daily-cum_plateau-value_yearly-sd" value="0.100 (default: 0.1)" at={25} />
        <SmallMonitor className="mt-0.5 w-[138px]" name="precipitation_dailyCum_plat..." value="0.1" />
      </Row>
      <Row className="mt-px pl-[5px]">
        <Slider className="w-[410px]" name="precipitation_daily-cum_inflection2_..." value="240 day of year (default: 240)" at={32} />
        <SmallMonitor className="w-[156px]" name="precipitation_dailyCum_inflection..." value="240" />
      </Row>
      <Row className="mt-px gap-0.5 pl-[6px]">
        <Slider className="w-[403px]" name="precipitation_daily-cum_inflection2_yearly-sd" value="20 days (default: 20)" at={0} />
        <SmallMonitor className="mt-[3px] w-[154px]" name="precipitation_dailyCum_inflectio..." value="20" />
      </Row>
      <Row className="-mt-[3px] pl-[7px]">
        <Slider className="w-[402px]" name="precipitation_daily-cum_rate2_yearly-mean" value="0.080 (default: 0.08)" at={100} />
        <SmallMonitor className="mt-px w-[156px]" name="precipitation_dailyCum_rate2_ye..." value="0.08" />
      </Row>
      <Row className="-mt-px gap-0.5 pl-[7px]">
        <Slider className="w-[403px]" name="precipitation_daily-cum_rate2_yearly-sd" value="0.020 (default: 0.02)" at={61.4} />
        <SmallMonitor className="mt-[3px] w-[154px]" name="precipitation_dailyCum_rate2_y..." value="0.02" />
      </Row>
    </div>
  );
}

export default function App() {
  return (
    <main className="min-h-screen bg-white font-['DejaVu_Sans_Condensed','DejaVu_Sans',sans-serif] text-black">
      <Row className="pt-[10px]">
        <div className="w-[849px] shrink-0">
          <Row>
            <Controls />
            <LegendPlot />
          </Row>
          <OutputArea />
          <CropsSelected />
          <SoilControls />
        </div>
        <div className="min-w-0 flex-1">
          <BiomassPlot />
          <YieldPlot />
          <SoilPlot />
          <TemperaturePlot />
          <SolarPlot />
          <Co2Plot />
          <RainPlot />
        </div>
      </Row>
      <Row className="-mt-1">
        <WeatherLeft />
        <WeatherRight />
      </Row>
    </main>
  );
}
